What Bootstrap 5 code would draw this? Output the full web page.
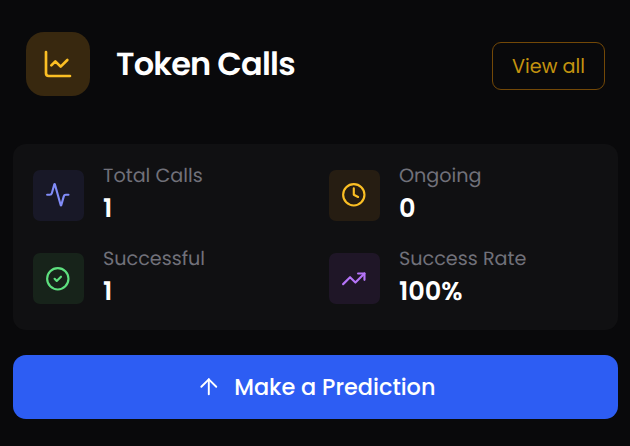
<!DOCTYPE html>
<html lang="en">
<head>
<meta charset="utf-8">
<meta name="viewport" content="width=device-width, initial-scale=1">
<title>Token Calls</title>
<link href="https://cdn.jsdelivr.net/npm/bootstrap@5.3.0/dist/css/bootstrap.min.css" rel="stylesheet">
<style>
body{background:#09090b;font-family:Poppins,Inter,"Liberation Sans",sans-serif;color:#fff;overflow:hidden;text-rendering:geometricPrecision}
svg{display:block;fill:none;stroke:currentColor;stroke-width:2;stroke-linecap:round;stroke-linejoin:round}
.panel-head{padding:32px 25px 0 26px;height:144px}
.head-icon{width:64px;height:64px;border-radius:18px;background:#38280f;color:#fbbf24}
.head-title{font-size:32px;font-weight:600;line-height:66px;margin-left:26px;letter-spacing:-.8px}
.btn-view{margin-top:10px;width:113px;height:48px;border:1px solid #734807;border-radius:9px;color:#c4930f;font-size:19.2px;padding:1px 0 0;line-height:46px}
.btn-view:hover{color:#fbbf24;border-color:#a16207}
.stats{margin:0 12px 0 13px;height:186px;border-radius:13px;background:#101012;padding:20px 0 0 20px;display:grid;grid-template-columns:296px 1fr;grid-auto-rows:83px}
.tile{width:51px;height:51px;border-radius:7px;margin-top:6px;padding:0 2px 1px 0}
.tile-blue{background:#181827;color:#818cf8}
.tile-amber{background:#261d12;color:#fbbf24}
.tile-green{background:#17231a;color:#5ee07f;padding-bottom:0}
.tile-purple{background:#1f1627;color:#b574f8;padding-bottom:0}
.stat-text{margin-left:19px}
.stat-label{color:#71717a;font-size:19.2px;line-height:24px}
.stat-value{font-size:25.6px;font-weight:600;line-height:32px;margin-top:4px}
.btn-predict{margin:25px 12px 0 13px;height:64px;border-radius:13px;background:#2d5df3;color:#fff;font-size:22.4px;font-weight:500;gap:13px;padding:0}
.btn-predict:hover{background:#1d4ed8;color:#fff}
.btn-predict svg{stroke-width:1.8}
.btn-predict span{padding-top:2px}
</style>
</head>
<body>
<main class="d-flex flex-column">
  <header class="panel-head d-flex align-items-start">
    <div class="head-icon d-flex align-items-center justify-content-center flex-shrink-0">
      <svg width="32" height="32" viewBox="0 0 24 24"><path d="M3 3v16a2 2 0 0 0 2 2h16"/><path d="m19 9-5 5-4-4-3 3"/></svg>
    </div>
    <h1 class="head-title mb-0 text-nowrap">Token Calls</h1>
    <button type="button" class="btn btn-view ms-auto text-nowrap">View all</button>
  </header>
  <section class="stats">
    <div class="d-flex align-items-start">
      <div class="tile tile-blue d-flex align-items-center justify-content-center"><svg width="25.6" height="25.6" viewBox="0 0 24 24"><path d="M22 12h-2.48a2 2 0 0 0-1.93 1.46l-2.35 8.36a.25.25 0 0 1-.48 0L9.24 2.18a.25.25 0 0 0-.48 0l-2.35 8.36A2 2 0 0 1 4.49 12H2"/></svg></div>
      <div class="stat-text"><div class="stat-label">Total Calls</div><div class="stat-value">1</div></div>
    </div>
    <div class="d-flex align-items-start">
      <div class="tile tile-amber d-flex align-items-center justify-content-center"><svg width="25.6" height="25.6" viewBox="0 0 24 24"><circle cx="12" cy="12" r="10"/><path d="M12 6v6l4 2"/></svg></div>
      <div class="stat-text"><div class="stat-label">Ongoing</div><div class="stat-value">0</div></div>
    </div>
    <div class="d-flex align-items-start">
      <div class="tile tile-green d-flex align-items-center justify-content-center"><svg width="25.6" height="25.6" viewBox="0 0 24 24"><circle cx="12" cy="12" r="10"/><path d="m9 12 2 2 4-4"/></svg></div>
      <div class="stat-text"><div class="stat-label">Successful</div><div class="stat-value">1</div></div>
    </div>
    <div class="d-flex align-items-start">
      <div class="tile tile-purple d-flex align-items-center justify-content-center"><svg width="25.6" height="25.6" viewBox="0 0 24 24"><path d="m22 7-8.5 8.5-5-5L2 17"/><path d="M16 7h6v6"/></svg></div>
      <div class="stat-text"><div class="stat-label">Success Rate</div><div class="stat-value">100%</div></div>
    </div>
  </section>
  <button type="button" class="btn btn-predict d-flex align-items-center justify-content-center">
    <svg width="25.6" height="25.6" viewBox="0 0 24 24"><path d="m5 12 7-7 7 7"/><path d="M12 19V5"/></svg>
    <span>Make a Prediction</span>
  </button>
</main>
<script src="https://cdn.jsdelivr.net/npm/bootstrap@5.3.0/dist/js/bootstrap.bundle.min.js"></script>
</body>
</html>
